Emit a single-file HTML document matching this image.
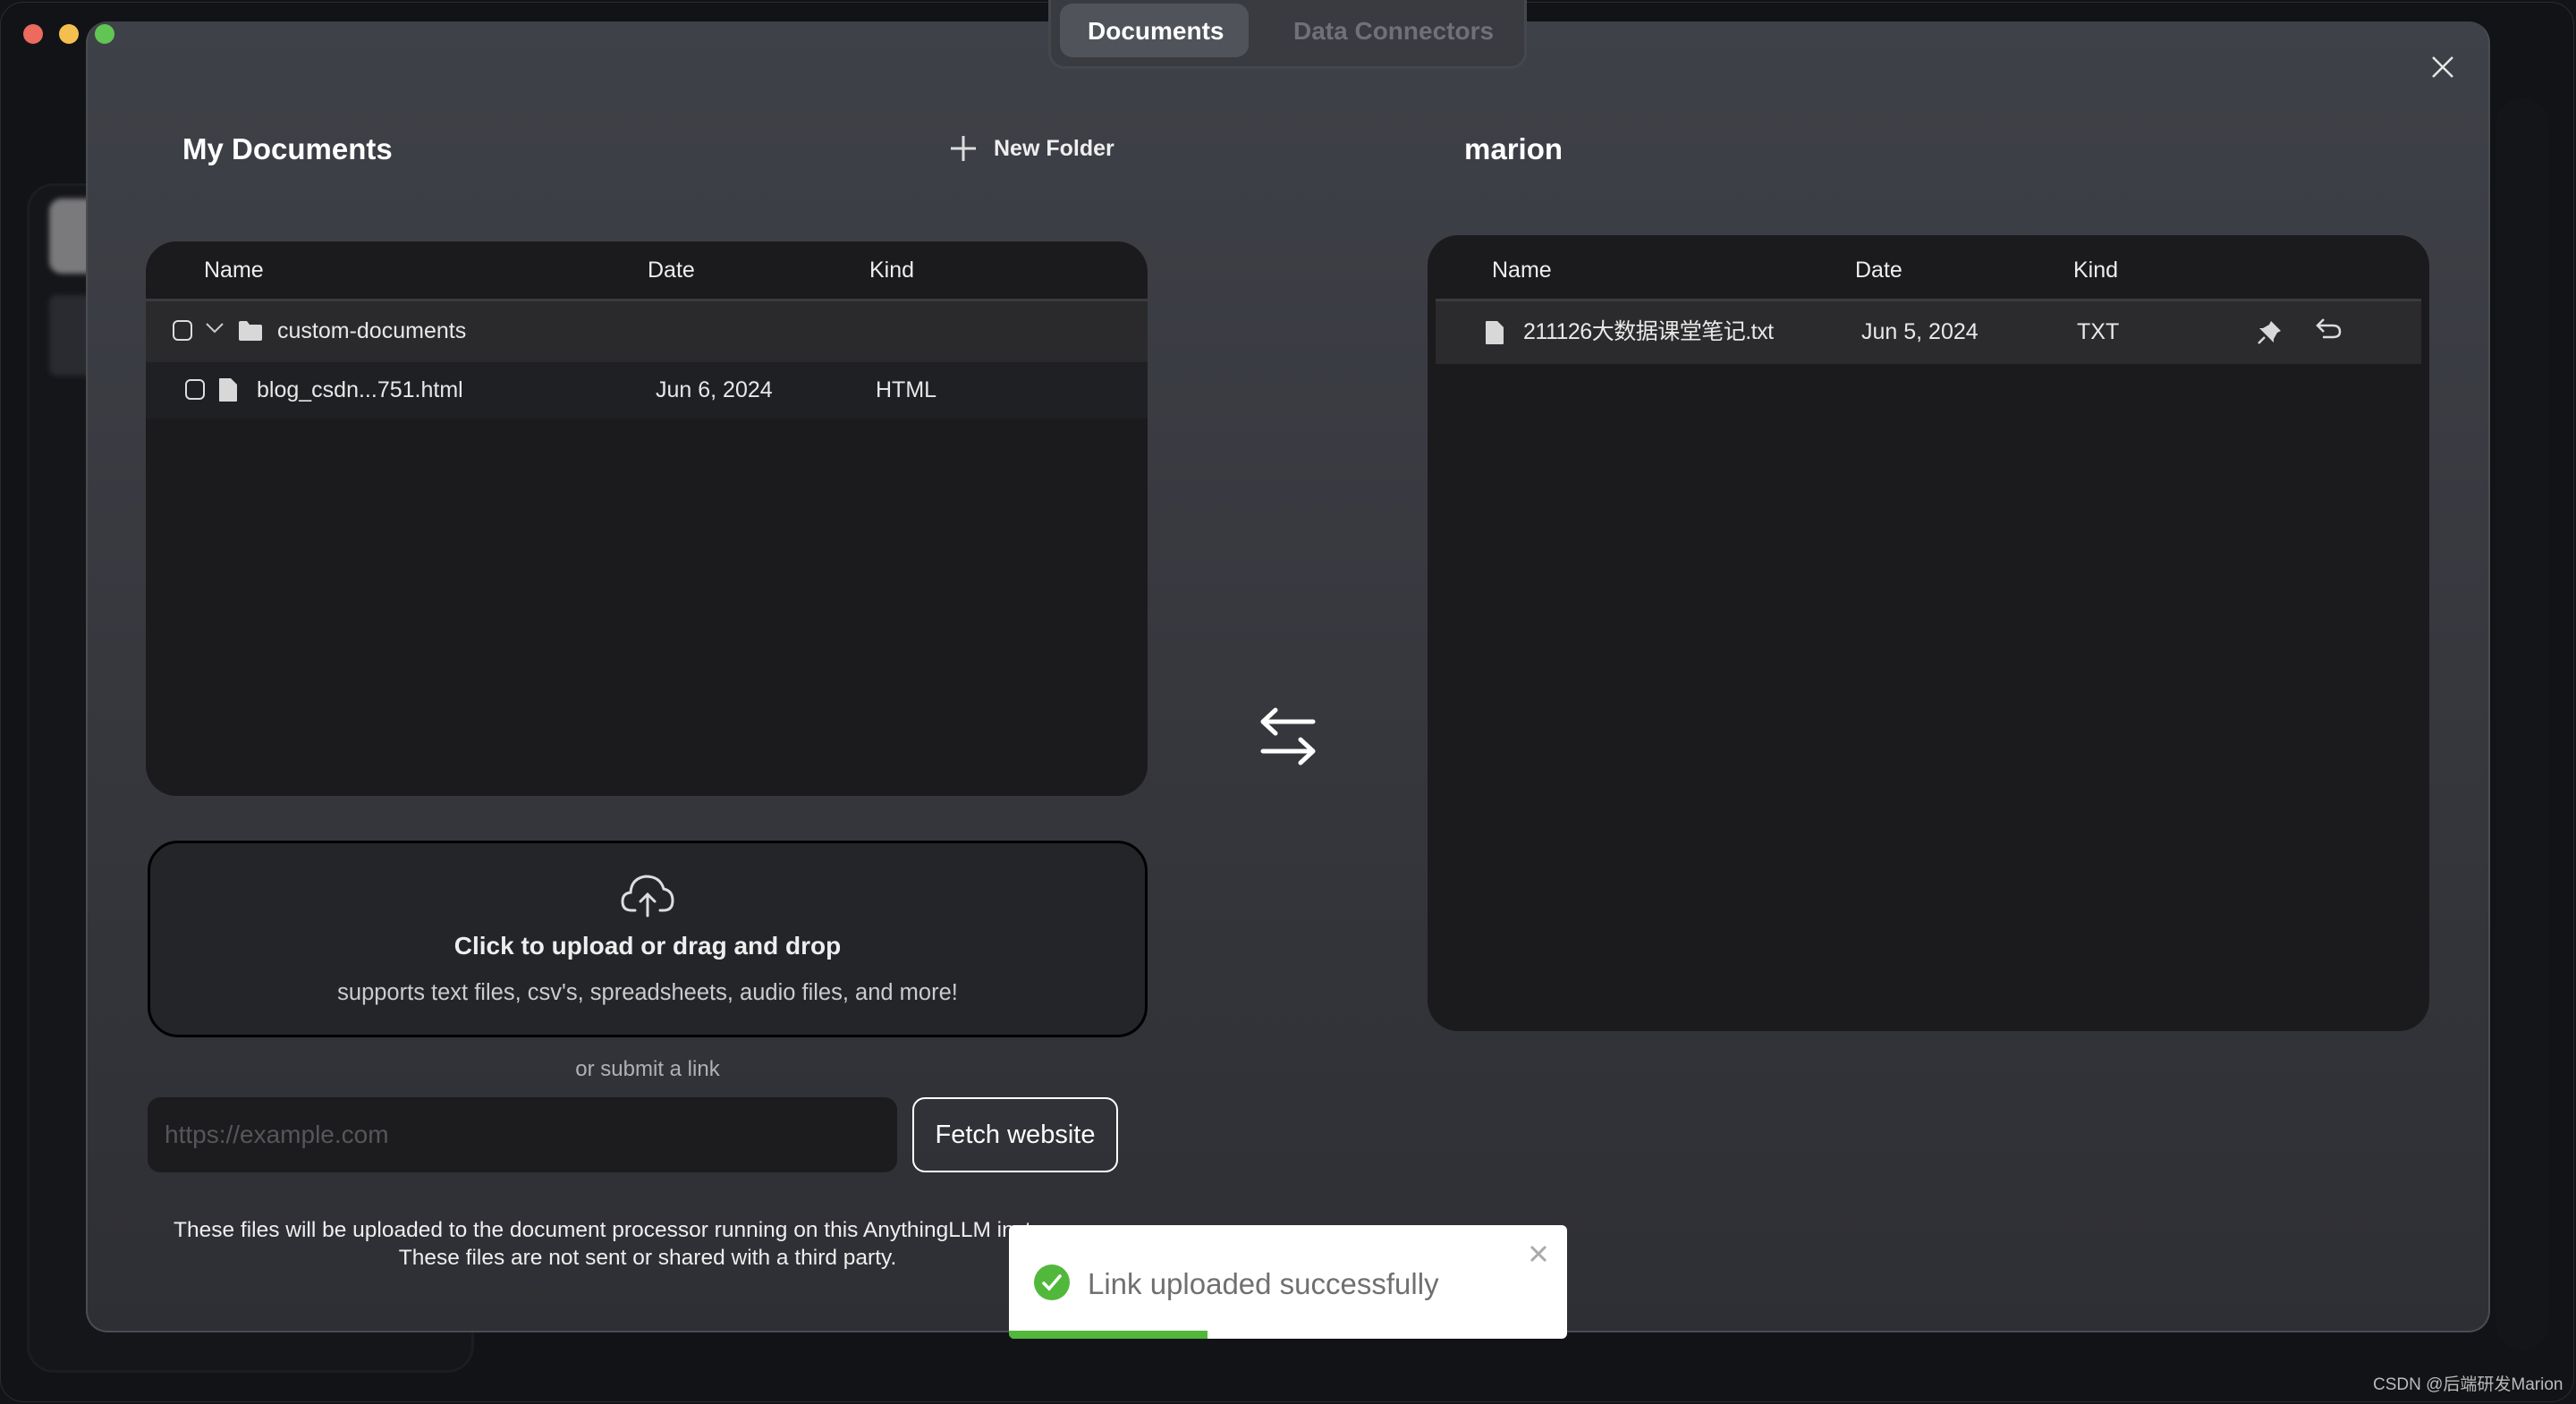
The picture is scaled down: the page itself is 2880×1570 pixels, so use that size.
<!DOCTYPE html>
<html><head><meta charset="utf-8"><style>
*{margin:0;padding:0;box-sizing:border-box}
html,body{width:2880px;height:1570px;overflow:hidden;background:#131418;font-family:"Liberation Sans","Noto Sans CJK SC",sans-serif;color:#fff}
.abs{position:absolute}
.t{position:absolute;white-space:nowrap;line-height:1}
</style></head><body>
<!-- background window -->
<div class="abs" style="left:0;top:2px;width:2878px;height:1566px;border-radius:26px;background:#121317;border:1px solid #2a2b30"></div>
<div class="abs" style="left:30px;top:205px;width:500px;height:1330px;border-radius:30px;border:3px solid #1c1d21;background:#15161a"></div>
<div class="abs" style="left:55px;top:222px;width:60px;height:84px;border-radius:14px;background:#7a7a7c;filter:blur(3px)"></div>
<div class="abs" style="left:55px;top:330px;width:60px;height:90px;border-radius:8px;background:#2a2b30;filter:blur(3px)"></div>
<div class="abs" style="left:2790px;top:110px;width:60px;height:1400px;border-radius:30px;background:#141519"></div>
<!-- modal -->
<div class="abs" style="left:96px;top:24px;width:2688px;height:1466px;border-radius:24px;background:linear-gradient(#3f4148,#2e2f34);border:2px solid #4a4c52;border-top:none"></div>
<!-- traffic lights -->
<div class="abs" style="left:26px;top:27px;width:22px;height:22px;border-radius:50%;background:#ec6a5e"></div>
<div class="abs" style="left:66px;top:27px;width:22px;height:22px;border-radius:50%;background:#f4bf4f"></div>
<div class="abs" style="left:106px;top:27px;width:22px;height:22px;border-radius:50%;background:#61c554"></div>
<!-- tabs -->
<div class="abs" style="left:1172px;top:0;width:535px;height:77px;border-radius:0 0 18px 18px;background:#393b41;border:3px solid #45474d;border-top:none"></div>
<div class="abs" style="left:1185px;top:4px;width:211px;height:60px;border-radius:14px;background:#50535a"></div>
<div class="t" style="left:1216px;top:21px;font-size:28px;font-weight:bold;color:#fff">Documents</div>
<div class="t" style="left:1446px;top:21px;font-size:28px;font-weight:bold;color:#6f7178">Data Connectors</div>
<!-- close -->
<svg class="abs" style="left:2718px;top:62px" width="26" height="26" viewBox="0 0 26 26"><path d="M2 2L24 24M24 2L2 24" stroke="#e6e6e6" stroke-width="2.5"/></svg>
<!-- headings -->
<div class="t" style="left:204px;top:150px;font-size:33px;font-weight:bold">My Documents</div>
<svg class="abs" style="left:1062px;top:151px" width="30" height="30"><path d="M15 1V29M1 15H29" stroke="#ddd" stroke-width="3"/></svg>
<div class="t" style="left:1111px;top:154px;font-size:25px;font-weight:bold;color:#eee">New Folder</div>
<div class="t" style="left:1637px;top:150px;font-size:33px;font-weight:bold">marion</div>
<!-- left table -->
<div class="abs" style="left:163px;top:270px;width:1120px;height:620px;border-radius:34px;background:#1b1b1e;overflow:hidden">
 <div class="abs" style="left:0;top:64px;width:1120px;height:3px;background:#3a3b3f"></div>
 <div class="abs" style="left:0;top:67px;width:1120px;height:68px;background:#2a2a2c"></div>
 <div class="abs" style="left:0;top:135px;width:1120px;height:63px;background:#1f2023"></div>
</div>
<div class="t" style="left:228px;top:290px;font-size:25px;color:#eee">Name</div>
<div class="t" style="left:724px;top:290px;font-size:25px;color:#eee">Date</div>
<div class="t" style="left:972px;top:290px;font-size:25px;color:#eee">Kind</div>
<div class="abs" style="left:193px;top:358px;width:22px;height:23px;border-radius:6px;border:2.5px solid #ddd"></div>
<svg class="abs" style="left:229px;top:360px" width="22" height="14"><path d="M2 2L11 11L20 2" stroke="#ccc" stroke-width="2" fill="none"/></svg>
<svg class="abs" style="left:266px;top:358px" width="28" height="24"><path d="M1 3Q1 1 3 1H10L13 5H25Q27 5 27 7V21Q27 23 25 23H3Q1 23 1 21Z" fill="#d8d8d8"/></svg>
<div class="t" style="left:310px;top:358px;font-size:25px;color:#e8e8e8">custom-documents</div>
<div class="abs" style="left:207px;top:424px;width:22px;height:23px;border-radius:6px;border:2.5px solid #ddd"></div>
<svg class="abs" style="left:244px;top:422px" width="22" height="28"><path d="M1 2Q1 1 2 1H14L21 8V26Q21 27 20 27H2Q1 27 1 26Z" fill="#d8d8d8"/></svg>
<div class="t" style="left:287px;top:424px;font-size:25px;color:#e8e8e8">blog_csdn...751.html</div>
<div class="t" style="left:733px;top:424px;font-size:25px;color:#e8e8e8">Jun 6, 2024</div>
<div class="t" style="left:979px;top:424px;font-size:25px;color:#e8e8e8">HTML</div>
<!-- arrows -->
<svg class="abs" style="left:1400px;top:790px" width="80" height="70"><g stroke="#fff" stroke-width="5" stroke-linecap="round" stroke-linejoin="round" fill="none"><path d="M68 17H12M26 4L12 17L26 30"/><path d="M12 50H68M54 37L68 50L54 63"/></g></svg>
<!-- right table -->
<div class="abs" style="left:1596px;top:263px;width:1120px;height:890px;border-radius:34px;background:#1b1b1e;overflow:hidden">
 <div class="abs" style="left:9px;top:71px;width:1102px;height:3px;background:#3a3b3f"></div>
 <div class="abs" style="left:9px;top:74px;width:1102px;height:70px;background:#2b2b2d"></div>
</div>
<div class="t" style="left:1668px;top:290px;font-size:25px;color:#eee">Name</div>
<div class="t" style="left:2074px;top:290px;font-size:25px;color:#eee">Date</div>
<div class="t" style="left:2318px;top:290px;font-size:25px;color:#eee">Kind</div>
<svg class="abs" style="left:1660px;top:358px" width="22" height="28"><path d="M1 2Q1 1 2 1H14L21 8V26Q21 27 20 27H2Q1 27 1 26Z" fill="#d8d8d8"/></svg>
<div class="t" style="left:1703px;top:359px;font-size:25px;color:#e8e8e8;letter-spacing:-0.5px">211126大数据课堂笔记.txt</div>
<div class="t" style="left:2081px;top:359px;font-size:25px;color:#e8e8e8">Jun 5, 2024</div>
<div class="t" style="left:2322px;top:359px;font-size:25px;color:#e8e8e8">TXT</div>
<svg class="abs" style="left:2522px;top:357px" width="30" height="30" viewBox="0 0 30 30"><path d="M17 2L28 13L24 15L20 22L20 26L4 10L8 10L15 6Z" fill="#d8d8d8"/><path d="M10 20L3 27" stroke="#d8d8d8" stroke-width="2.5"/></svg>
<svg class="abs" style="left:2588px;top:355px" width="32" height="28" viewBox="0 0 32 28"><path d="M10 2L3 9L10 16M3 9H20Q28 9 28 16Q28 22 20 22H9" stroke="#ddd" stroke-width="2.5" fill="none"/></svg>
<!-- upload box -->
<div class="abs" style="left:165px;top:940px;width:1118px;height:220px;border-radius:34px;background:#242529;border:3.5px solid #000"></div>
<svg class="abs" style="left:692px;top:972px" width="64" height="56" viewBox="0 0 64 56"><g stroke="#ddd" stroke-width="3" fill="none" stroke-linecap="round"><path d="M18 46H14Q4 46 4 36Q4 27 13 26Q14 10 30 8Q46 8 50 22Q60 24 60 35Q60 46 50 46H46"/><path d="M32 52V28M24 36L32 28L40 36"/></g></svg>
<div class="t" style="left:0;width:1448px;text-align:center;top:1044px;font-size:28px;font-weight:bold;color:#eee">Click to upload or drag and drop</div>
<div class="t" style="left:0;width:1448px;text-align:center;top:1098px;font-size:25.5px;color:#ccc">supports text files, csv's, spreadsheets, audio files, and more!</div>
<div class="t" style="left:0;width:1448px;text-align:center;top:1184px;font-size:24px;color:#b0b1b6">or submit a link</div>
<div class="abs" style="left:165px;top:1227px;width:838px;height:84px;border-radius:14px;background:#1c1c1f"></div>
<div class="t" style="left:184px;top:1255px;font-size:28px;color:#55565b">https://example.com</div>
<div class="abs" style="left:1020px;top:1227px;width:230px;height:84px;border-radius:14px;border:2.5px solid #fff"></div>
<div class="t" style="left:1020px;width:230px;text-align:center;top:1255px;font-size:29px;color:#fff">Fetch website</div>
<div class="t" style="left:194px;top:1364px;font-size:24.5px;color:#eee">These files will be uploaded to the document processor running on this AnythingLLM instance.</div>
<div class="t" style="left:0;width:1448px;text-align:center;top:1395px;font-size:24.5px;color:#eee">These files are not sent or shared with a third party.</div>
<!-- toast -->
<div class="abs" style="left:1128px;top:1370px;width:624px;height:127px;border-radius:6px;background:#fff;overflow:hidden">
 <div class="abs" style="left:0;top:118px;width:222px;height:9px;background:#52b83c"></div>
</div>
<svg class="abs" style="left:1156px;top:1414px" width="40" height="40"><circle cx="20" cy="20" r="20" fill="#52b83c"/><path d="M11 21L17 27L29 13" stroke="#fff" stroke-width="3.5" fill="none" stroke-linecap="round"/></svg>
<div class="t" style="left:1216px;top:1419px;font-size:33px;color:#707070">Link uploaded successfully</div>
<svg class="abs" style="left:1710px;top:1392px" width="20" height="20"><path d="M2 2L18 18M18 2L2 18" stroke="#aaa" stroke-width="3"/></svg>
<div class="t" style="left:2653px;top:1539px;font-size:19px;color:#bbb">CSDN @后端研发Marion</div>
</body></html>
